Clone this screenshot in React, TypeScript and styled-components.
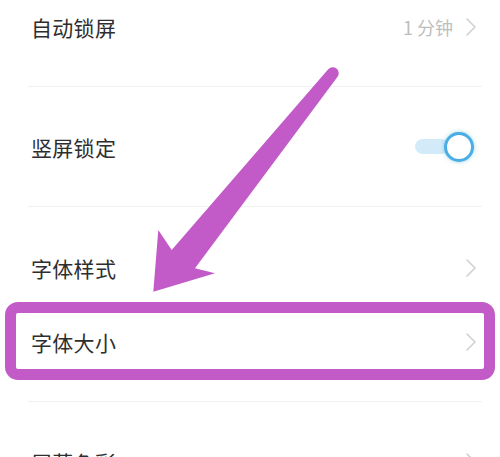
import React from 'react';
import styled, { createGlobalStyle } from 'styled-components';

const GlobalStyle = createGlobalStyle`
  html, body {
    margin: 0;
    padding: 0;
    background: #ffffff;
  }
  body {
    font-family: "Noto Sans CJK SC", "Noto Sans", sans-serif;
  }
`;

const ACCENT = '#c25bc8';

const Screen = styled.div`
  position: relative;
  width: 500px;
  height: 457px;
  overflow: hidden;
  background: #ffffff;
`;

const List = styled.div`
  display: flex;
  flex-direction: column;
  margin-top: -32px;
  padding: 0 18px 0 28px;
`;

const Row = styled.div<{ $height: number; $offset?: number; $divider?: boolean }>`
  display: flex;
  align-items: center;
  justify-content: space-between;
  box-sizing: border-box;
  height: ${p => p.$height}px;
  padding: ${p => p.$offset || 0}px 5px 0 3px;
  border-bottom: ${p => (p.$divider ? '1px solid #f1f1f1' : 'none')};
`;

const Label = styled.span`
  font-size: 21px;
  color: #2e2e2e;
  letter-spacing: 0.3px;
`;

const Trail = styled.div`
  display: flex;
  align-items: center;
  gap: 12px;
`;

const Value = styled.span`
  font-size: 18px;
  color: #bdbdbd;
`;

const Chevron = () => (
  <svg width="12" height="20" viewBox="0 0 12 20" fill="none">
    <path d="M2 2 L10 10 L2 18" stroke="#d0d0d0" strokeWidth="1.6" strokeLinecap="round" strokeLinejoin="round" />
  </svg>
);

const Toggle = styled.div`
  position: relative;
  width: 60px;
  height: 32px;
  margin-right: 2px;
  display: flex;
  align-items: center;
`;

const Track = styled.div`
  width: 34px;
  height: 15px;
  border-radius: 8px;
  background: #d3ebf9;
`;

const Knob = styled.div`
  position: absolute;
  right: 1px;
  top: 1px;
  width: 24px;
  height: 24px;
  border-radius: 50%;
  background: #ffffff;
  border: 3px solid #49aee6;
  box-shadow: 0 0 4px rgba(80, 190, 240, 0.55), 0 0 3px rgba(255, 230, 150, 0.4);
`;

const Highlight = styled.div`
  position: absolute;
  left: 5px;
  top: 302px;
  width: 490px;
  height: 78px;
  box-sizing: border-box;
  border: 11px solid ${ACCENT};
  border-radius: 13px;
  pointer-events: none;
`;

const ArrowLayer = styled.svg`
  position: absolute;
  left: 0;
  top: 0;
  pointer-events: none;
`;

export default function App() {
  return (
    <>
      <GlobalStyle />
      <Screen>
        <List>
          <Row $height={119} $divider>
            <Label>自动锁屏</Label>
            <Trail>
              <Value>1 分钟</Value>
              <Chevron />
            </Trail>
          </Row>
          <Row $height={120} $divider>
            <Label>竖屏锁定</Label>
            <Toggle>
              <Track />
              <Knob />
            </Toggle>
          </Row>
          <Row $height={75} $offset={47}>
            <Label>字体样式</Label>
            <Chevron />
          </Row>
          <Row $height={120} $divider>
            <Label>字体大小</Label>
            <Chevron />
          </Row>
          <Row $height={120}>
            <Label>屏幕色彩</Label>
            <Chevron />
          </Row>
        </List>
        <Highlight />
        <ArrowLayer width="500" height="457" viewBox="0 0 500 457">
          <path
            d="M328 69.5 L171.7 250 L158.3 230 L153.3 291.7 L215 273.3 L195 268.3 L337.4 77.1 A6 6 0 0 0 328 69.5 Z"
            fill={ACCENT}
          />
        </ArrowLayer>
      </Screen>
    </>
  );
}
